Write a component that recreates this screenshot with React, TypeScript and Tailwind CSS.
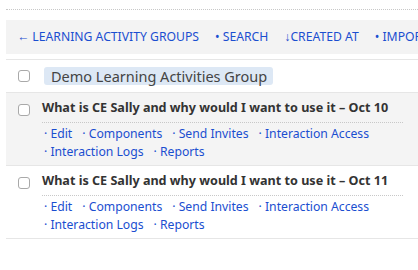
const links1 = ["Edit", "Components", "Send Invites", "Interaction Access"];
const links2 = ["Interaction Logs", "Reports"];

function Box({ className = "" }: { className?: string }) {
  return <span className={`block h-3 w-3 shrink-0 rounded-[3px] border border-[#a9a9a9] bg-white ${className}`} />;
}

function Activity({ title, shaded }: { title: string; shaded?: boolean }) {
  return (
    <div className={`flex gap-3 border-b border-[#e6e6e6] pl-3 pt-[7px] pb-[5px] ${shaded ? "bg-[#f4f4f4]" : "bg-white"}`}>
      <Box className="mt-[4px]" />
      <div className="flex-1 pr-[15px]">
        <div className="whitespace-nowrap border-b border-dotted border-[#c8c8c8] pb-[6px] text-[12.6px] font-bold leading-[16px] text-[#333]">
          {title}
        </div>
        <div className="mt-[2px] flex flex-col gap-[1px] pl-[2px] text-[12.2px] leading-[17px] text-[#1a4ed0]">
          {[links1, links2].map((row, i) => (
            <div key={i} className="flex gap-[10px]">
              {row.map((l) => (
                <span key={l}>· {l}</span>
              ))}
            </div>
          ))}
        </div>
      </div>
    </div>
  );
}

export default function App() {
  return (
    <div className="h-[270px] w-[418px] overflow-hidden bg-white pt-[9px] pl-[6px] font-['Noto_Sans',sans-serif]">
      <div className="border-t border-dotted border-[#c8c8c8]" />
      <div className="mt-[10px] flex h-[34px] items-center gap-[16px] whitespace-nowrap bg-[#f3f3f3] pl-[11px] text-[12.2px] text-[#1a4ed0]">
        <span>← LEARNING ACTIVITY GROUPS</span>
        <span>• SEARCH</span>
        <span>↓CREATED AT</span>
        <span>• IMPORT</span>
      </div>
      <div className="mt-[5px] border-t border-[#e6e6e6]" />
      <div className="flex h-[33px] items-center gap-[14px] border-b border-[#e6e6e6] pl-3">
        <Box />
        <span className="rounded-[3px] bg-[#dde8f5] pl-[7px] pr-[6px] text-[14.5px] leading-[18px] text-[#444]">
          Demo Learning Activities Group
        </span>
      </div>
      <Activity shaded title="What is CE Sally and why would I want to use it – Oct 10" />
      <Activity title="What is CE Sally and why would I want to use it – Oct 11" />
    </div>
  );
}
